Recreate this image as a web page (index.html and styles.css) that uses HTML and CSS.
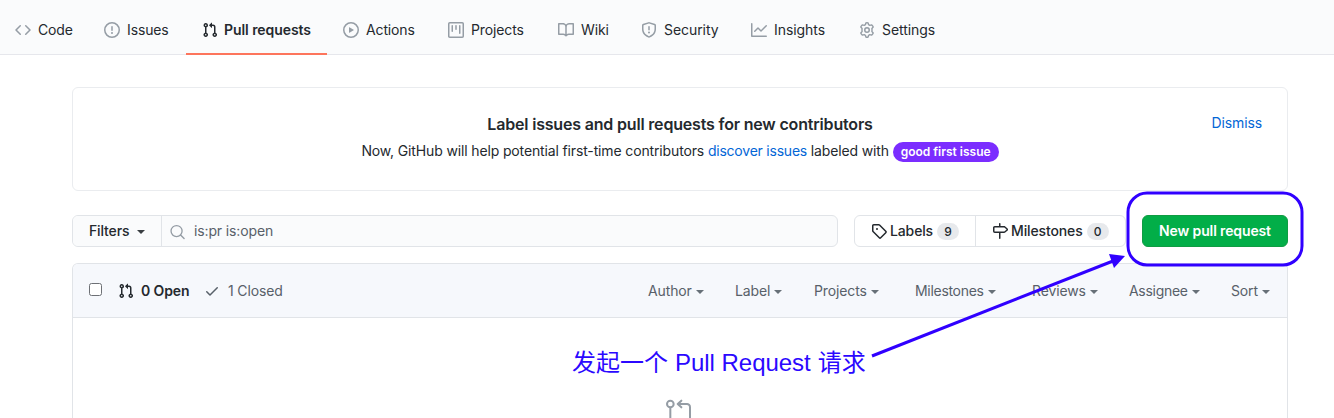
FILE: index.html
```html
<!DOCTYPE html>
<html lang="en">
<head>
<meta charset="utf-8">
<title>Pull requests</title>
<link rel="stylesheet" href="styles.css">
</head>
<body>
<svg class="defs" aria-hidden="true">
  <symbol id="pr" viewBox="0 0 16 16"><path fill-rule="evenodd" d="M7.177 3.073L9.573.677A.25.25 0 0110 .854v4.792a.25.25 0 01-.427.177L7.177 3.427a.25.25 0 010-.354zM3.75 2.5a.75.75 0 100 1.5.75.75 0 000-1.5zm-2.25.75a2.25 2.25 0 113 2.122v5.256a2.251 2.251 0 11-1.5 0V5.372A2.25 2.25 0 011.5 3.25zM11 2.5h-1V4h1a1 1 0 011 1v5.628a2.251 2.251 0 101.5 0V5A2.5 2.5 0 0011 2.5zm1 10.25a.75.75 0 111.5 0 .75.75 0 01-1.5 0zM3.75 12a.75.75 0 100 1.5.75.75 0 000-1.5z"/></symbol>
</svg>
<nav class="repo-nav">
  <a class="tab tab-code"><svg class="icon" viewBox="0 0 16 16"><path fill-rule="evenodd" d="M4.72 3.22a.75.75 0 011.06 1.06L2.06 8l3.72 3.72a.75.75 0 11-1.06 1.06L.47 8.53a.75.75 0 010-1.06l4.25-4.25zm6.56 0a.75.75 0 10-1.06 1.06L13.94 8l-3.72 3.72a.75.75 0 101.06 1.06l4.25-4.25a.75.75 0 000-1.06l-4.25-4.25z"/></svg><span>Code</span></a>
  <a class="tab tab-issues"><svg class="icon" viewBox="0 0 16 16"><path fill-rule="evenodd" d="M8 1.5a6.5 6.5 0 100 13 6.5 6.5 0 000-13zM0 8a8 8 0 1116 0A8 8 0 010 8zm9 3a1 1 0 11-2 0 1 1 0 012 0zm-.25-6.25a.75.75 0 00-1.5 0v3.5a.75.75 0 001.5 0v-3.5z"/></svg><span>Issues</span></a>
  <a class="tab tab-pulls selected"><svg class="icon"><use href="#pr"/></svg><span>Pull requests</span></a>
  <a class="tab tab-actions"><svg class="icon" viewBox="0 0 16 16"><path fill-rule="evenodd" d="M1.5 8a6.5 6.5 0 1113 0 6.5 6.5 0 01-13 0zM8 0a8 8 0 100 16A8 8 0 008 0zM6.379 5.227A.25.25 0 006 5.442v5.117a.25.25 0 00.379.214l4.264-2.559a.25.25 0 000-.428L6.379 5.227z"/></svg><span>Actions</span></a>
  <a class="tab tab-projects"><svg class="icon" viewBox="0 0 16 16"><path fill-rule="evenodd" d="M1.75 0A1.75 1.75 0 000 1.75v12.5C0 15.216.784 16 1.75 16h12.5A1.75 1.75 0 0016 14.25V1.75A1.75 1.75 0 0014.25 0H1.75zM1.5 1.75a.25.25 0 01.25-.25h12.5a.25.25 0 01.25.25v12.5a.25.25 0 01-.25.25H1.75a.25.25 0 01-.25-.25V1.75zM11.75 3a.75.75 0 00-.75.75v7.5a.75.75 0 001.5 0v-7.5a.75.75 0 00-.75-.75zm-8.25.75a.75.75 0 011.5 0v5.5a.75.75 0 01-1.5 0v-5.5zM8 3a.75.75 0 00-.75.75v3.5a.75.75 0 001.5 0v-3.5A.75.75 0 008 3z"/></svg><span>Projects</span></a>
  <a class="tab tab-wiki"><svg class="icon" viewBox="0 0 16 16"><path fill-rule="evenodd" d="M0 1.75A.75.75 0 01.75 1h4.253c1.227 0 2.317.59 3 1.501A3.744 3.744 0 0111.006 1h4.245a.75.75 0 01.75.75v10.5a.75.75 0 01-.75.75h-4.507a2.25 2.25 0 00-1.591.659l-.622.621a.75.75 0 01-1.06 0l-.622-.621A2.25 2.25 0 005.258 13H.75a.75.75 0 01-.75-.75V1.75zm8.755 3a2.25 2.25 0 012.25-2.25H14.5v9h-3.757c-.71 0-1.4.201-1.992.572l.004-7.322zm-1.504 7.324l.004-5.073-.002-2.253A2.25 2.25 0 005.003 2.5H1.5v9h3.757a3.75 3.75 0 011.994.574z"/></svg><span>Wiki</span></a>
  <a class="tab tab-security"><svg class="icon" viewBox="0 0 16 16"><path fill-rule="evenodd" d="M7.467.133a1.75 1.75 0 011.066 0l5.25 1.68A1.75 1.75 0 0115 3.48V7c0 1.566-.32 3.182-1.303 4.682-.983 1.498-2.585 2.813-5.032 3.855a1.7 1.7 0 01-1.33 0c-2.447-1.042-4.049-2.357-5.032-3.855C1.32 10.182 1 8.566 1 7V3.48a1.75 1.75 0 011.217-1.667l5.25-1.68zm.61 1.429a.25.25 0 00-.153 0l-5.25 1.68a.25.25 0 00-.174.238V7c0 1.358.275 2.666 1.057 3.86.784 1.194 2.121 2.34 4.366 3.297a.2.2 0 00.154 0c2.245-.956 3.582-2.104 4.366-3.298C13.225 9.666 13.5 8.36 13.5 7V3.48a.25.25 0 00-.174-.237l-5.25-1.68zM9 10.5a1 1 0 11-2 0 1 1 0 012 0zm-.25-5.75a.75.75 0 10-1.5 0v3a.75.75 0 001.5 0v-3z"/></svg><span>Security</span></a>
  <a class="tab tab-insights"><svg class="icon" viewBox="0 0 16 16"><path fill-rule="evenodd" d="M1.5 1.75a.75.75 0 00-1.5 0v12.5c0 .414.336.75.75.75h14.5a.75.75 0 000-1.5H1.5V1.75zm14.28 2.53a.75.75 0 00-1.06-1.06L10 7.94 7.53 5.47a.75.75 0 00-1.06 0L3.22 8.72a.75.75 0 001.06 1.06L7 7.06l2.47 2.47a.75.75 0 001.06 0l5.25-5.25z"/></svg><span>Insights</span></a>
  <a class="tab tab-settings"><svg class="icon" viewBox="0 0 16 16"><path fill="none" stroke="currentColor" stroke-width="1.4" stroke-linejoin="round" d="M6.9.9Q8 .6 9.1.9L9.6 2.7 10.8 3.4 12.6 2.9Q13.8 3.8 14.2 5L12.9 6.4Q13.1 8 12.9 9.6L14.2 11Q13.8 12.2 12.6 13.1L10.8 12.6 9.6 13.3 9.1 15.1Q8 15.4 6.9 15.1L6.4 13.3 5.2 12.6 3.4 13.1Q2.2 12.2 1.8 11L3.1 9.6Q2.9 8 3.1 6.4L1.8 5Q2.2 3.8 3.4 2.9L5.2 3.4 6.4 2.7Z"/><circle cx="8" cy="8" r="2.25" fill="none" stroke="currentColor" stroke-width="1.5"/></svg><span>Settings</span></a>
</nav>
<main class="page">
  <section class="notice">
    <a class="dismiss">Dismiss</a>
    <h3>Label issues and pull requests for new contributors</h3>
    <p>Now, GitHub will help potential first-time contributors <a class="discover">discover issues</a> labeled with <span class="pill">good first issue</span></p>
  </section>
  <div class="toolbar">
    <div class="search">
      <button class="filters">Filters<i class="caret"></i></button>
      <div class="query"><svg class="icon" viewBox="0 0 16 16"><circle cx="7" cy="7" r="5.9" fill="none" stroke="currentColor" stroke-width="1.4"/><path d="M11.3 11.3 15 15" stroke="currentColor" stroke-width="1.5" stroke-linecap="round"/></svg><span>is:pr is:open</span></div>
    </div>
    <div class="subnav">
      <a class="labels"><svg class="icon" viewBox="0 0 16 16"><path fill-rule="evenodd" d="M2.5 7.775V2.75a.25.25 0 01.25-.25h5.025a.25.25 0 01.177.073l6.25 6.25a.25.25 0 010 .354l-5.025 5.025a.25.25 0 01-.354 0l-6.25-6.25a.25.25 0 01-.073-.177zm-1.5 0V2.75C1 1.784 1.784 1 2.75 1h5.025c.464 0 .91.184 1.238.513l6.25 6.25a1.75 1.75 0 010 2.474l-5.026 5.026a1.75 1.75 0 01-2.474 0l-6.25-6.25A1.75 1.75 0 011 7.775zM6 5a1 1 0 100 2 1 1 0 000-2z"/></svg><span>Labels</span><b class="count">9</b></a>
      <a class="milestones"><svg class="icon" viewBox="0 0 16 16"><path fill-rule="evenodd" d="M7.75 0a.75.75 0 01.75.75V3h3.634c.414 0 .814.147 1.13.414l2.07 1.75a1.75 1.75 0 010 2.672l-2.07 1.75a1.75 1.75 0 01-1.13.414H8.5v5.25a.75.75 0 11-1.5 0V10H2.75A1.75 1.75 0 011 8.25v-3.5C1 3.784 1.784 3 2.75 3H7V.75A.75.75 0 017.75 0zm0 8.5h4.384a.25.25 0 00.161-.06l2.07-1.75a.25.25 0 000-.38l-2.07-1.75a.25.25 0 00-.161-.06H2.75a.25.25 0 00-.25.25v3.5c0 .138.112.25.25.25h5z"/></svg><span>Milestones</span><b class="count">0</b></a>
    </div>
    <button class="new-pr">New pull request</button>
  </div>
  <section class="list">
    <header class="list-head">
      <span class="checkbox"></span>
      <a class="open"><svg class="icon"><use href="#pr"/></svg><span>0 Open</span></a>
      <a class="closed"><svg class="icon" viewBox="0 0 16 16"><path fill-rule="evenodd" d="M13.78 4.22a.75.75 0 010 1.06l-7.25 7.25a.75.75 0 01-1.06 0L2.22 9.28a.75.75 0 011.06-1.06L6 10.94l6.72-6.72a.75.75 0 011.06 0z"/></svg><span>1 Closed</span></a>
      <div class="menus">
        <a class="m-author">Author<i class="caret"></i></a>
        <a class="m-label">Label<i class="caret"></i></a>
        <a class="m-projects">Projects<i class="caret"></i></a>
        <a class="m-milestones">Milestones<i class="caret"></i></a>
        <a class="m-reviews">Reviews<i class="caret"></i></a>
        <a class="m-assignee">Assignee<i class="caret"></i></a>
        <a class="m-sort">Sort<i class="caret"></i></a>
      </div>
    </header>
    <div class="blank">
      <svg class="blank-icon" viewBox="0 0 24 15"><path fill="none" stroke="currentColor" stroke-width="1.5" stroke-linecap="round" stroke-linejoin="round" d="M4.75 7.3V16M13 2 10.3 4.5 13 7M10.8 4.5H17A2.25 2.25 0 0 1 19.5 6.75V16"/><circle cx="4.75" cy="4.5" r="2.5" fill="none" stroke="currentColor" stroke-width="1.5"/></svg>
    </div>
  </section>
</main>
<svg class="marks" viewBox="0 0 1334 418">
  <rect x="1128" y="193" width="174" height="72" rx="19" fill="none" stroke="#3000ff" stroke-width="3"/>
  <path d="M872 356 1113 261" stroke="#3000ff" stroke-width="3"/>
  <path d="M1109 254 1125 256 1114 268Z" fill="#3000ff"/>
</svg>
<div class="note"><span>发起一个</span><span class="note-latin">Pull Request</span><span>请求</span></div>
</body>
</html>
```
FILE: styles.css
```css
* { box-sizing: border-box; }
body { margin: 0; width: 1334px; height: 418px; overflow: hidden; position: relative; background: #fff; color: #24292e; font: 14px/21px Inter, "Liberation Sans", sans-serif; letter-spacing: -0.13px; white-space: nowrap; }
.defs { display: none; }
.icon { width: 16px; height: 16px; fill: currentColor; flex: none; }
.repo-nav { display: flex; height: 55px; padding-top: 5px; background: #fafbfc; border-bottom: 1px solid #e6e7ec; }
.tab { display: flex; align-items: center; gap: 7px; height: 50px; padding-left: 16px; flex: none; }
.tab .icon { color: #959da5; }
.tab span { padding-bottom: 2px; }
.tab-code { width: 89px; margin-left: -1px; }
.tab-issues { width: 98px; }
.tab-pulls { width: 141px; }
.tab-actions { width: 105px; }
.tab-projects { width: 110px; }
.tab-wiki { width: 83px; }
.tab-security { width: 110px; }
.tab-insights { width: 108px; }
.tab-settings { width: 109px; }
.tab-security, .tab-insights, .tab-settings { letter-spacing: -0.06px; }
.tab.selected { font-weight: 600; border-bottom: 2px solid #fd755c; padding-top: 2px; gap: 6px; letter-spacing: -0.06px; }
.selected .icon { color: #24292e; }

.page { width: 1216px; margin: 32px 0 0 72px; }
.notice { position: relative; height: 104px; border: 1px solid #eaecef; border-radius: 6px; padding-top: 24px; text-align: center; }
.notice h3 { margin: 0; font-size: 16px; line-height: 25px; font-weight: 600; letter-spacing: -0.18px; }
.notice p { margin: 3px 0 0; line-height: 21px; letter-spacing: -0.14px; }
.notice a { color: #0366d6; }
.discover { letter-spacing: -0.22px; }
.dismiss { position: absolute; right: 25px; top: 24px; }
.pill { display: inline-block; height: 20px; line-height: 20px; padding: 0 8px; border-radius: 10px; background: #7b2dff; color: #fff; font-size: 12px; font-weight: 600; letter-spacing: 0; }

.toolbar { display: flex; height: 32px; margin-top: 24px; }
.search { display: flex; width: 766px; border: 1px solid #e1e4e8; border-radius: 6px; background: #fafbfc; overflow: hidden; }
button { font: inherit; letter-spacing: inherit; color: inherit; padding: 0; margin: 0; }
.filters { width: 89px; border: 0; border-right: 1px solid #e1e4e8; background: #fafbfc; font-weight: 500; text-align: left; padding: 0 0 2px 16px; }
.caret { display: inline-block; border: 4px solid transparent; border-top-color: currentColor; border-bottom: 0; margin-left: 4px; vertical-align: 2px; opacity: .9; }
.filters .caret { margin-left: 8px; }
.query { display: flex; align-items: center; gap: 9px; padding-left: 8px; color: #586069; }
.query span { padding-bottom: 2px; }
.query .icon { color: #959da5; width: 15px; margin-top: 2px; }
.subnav { display: flex; width: 272px; margin-left: 16px; border: 1px solid #e1e4e8; border-radius: 6px; font-weight: 500; }
.subnav a { display: flex; align-items: center; padding-left: 16px; }
.subnav span { padding-bottom: 2px; }
.subnav .icon { margin-right: 3px; }
.labels { width: 121px; border-right: 1px solid #e1e4e8; }
.count { height: 17px; min-width: 22px; margin: 1px 0 0 4px; border-radius: 9px; background: #e7e9ec; font-size: 12px; line-height: 17px; font-weight: 500; text-align: center; }
.new-pr { width: 146px; margin-left: 16px; padding-bottom: 2px; border: 1px solid #109c43; border-radius: 6px; background: #02ae48; color: #fff; font-weight: 600; }

.list { height: 155px; margin-top: 16px; border: 1px solid #e1e4e8; border-bottom: 0; border-radius: 6px 6px 0 0; overflow: hidden; }
.list-head { display: flex; align-items: center; height: 54px; padding-left: 16px; background: #f6f8fc; border-bottom: 1px solid #e1e4e8; color: #586069; }
.checkbox { width: 13px; height: 13px; margin-top: -3px; border: 1px solid #6d7075; border-radius: 2.5px; background: #fff; }
.open, .closed { display: flex; align-items: center; }
.open { width: 86px; margin-left: 16px; gap: 7px; color: #24292e; font-weight: 600; }
.closed { gap: 8px; }
.menus { display: flex; margin-left: auto; }
.menus a { flex: none; }
.m-author { width: 87px; }
.m-label { width: 79px; }
.m-projects { width: 101px; }
.m-milestones { width: 117px; }
.m-reviews { width: 97px; }
.m-assignee { width: 102px; }
.m-sort { width: 56px; }
.m-milestones, .m-assignee { letter-spacing: -0.3px; }
.blank { display: flex; justify-content: center; padding-top: 80px; }
.blank-icon { width: 32px; height: 20px; color: #959da5; }

.marks { position: absolute; inset: 0; width: 1334px; height: 418px; }
.note { position: absolute; left: 572px; top: 346px; display: flex; color: #2b08ff; font: 24px/34px "Liberation Sans", "Noto Sans CJK SC", sans-serif; letter-spacing: 0; }
.note-latin { margin: 0 7px; letter-spacing: -0.03px; }
```
